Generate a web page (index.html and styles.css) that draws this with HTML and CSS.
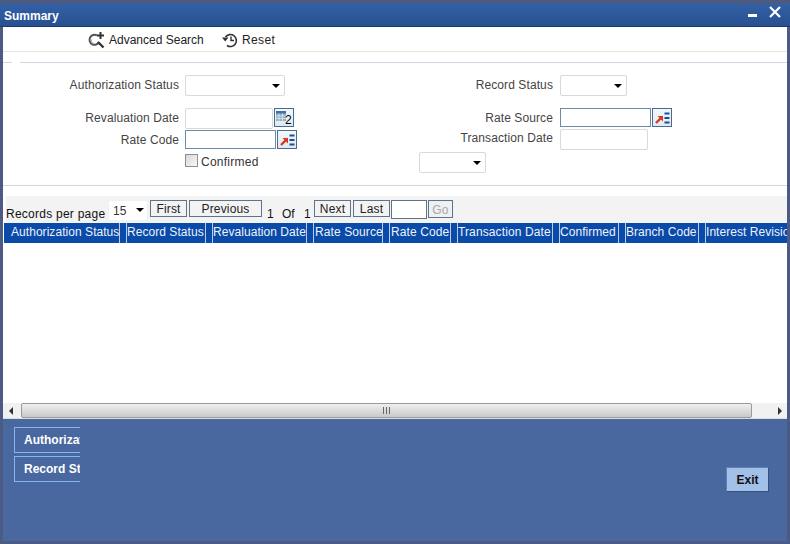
FILE: index.html
```html
<!DOCTYPE html>
<html lang="en">
<head>
<meta charset="utf-8">
<title>Summary</title>
<link rel="stylesheet" href="styles.css">
</head>
<body>
<div class="window">
  <header class="titlebar">
    <span class="title">Summary</span>
    <span class="win-controls">
      <svg class="win-min" width="10" height="4" viewBox="0 0 10 4"><rect width="9" height="3" y="0" fill="#fff"/></svg>
      <svg class="win-close" width="12" height="12" viewBox="0 0 12 12"><path d="M1 1 L11 11 M11 1 L1 11" stroke="#fff" stroke-width="2.2"/></svg>
    </span>
  </header>

  <main class="content">
  <nav class="toolbar">
    <span class="tool tool-search">
      <svg width="17" height="18" viewBox="0 0 17 18" fill="none">
        <path d="M9 4.5 A5 5 0 1 0 11 11" stroke="#555" stroke-width="2"/>
        <path d="M6 13 A5 5 0 0 1 3 8" stroke="#aaa" stroke-width="1"/>
        <path d="M10 11 L15.500 16.500" stroke="#333" stroke-width="2.400"/>
        <path d="M12.500 1 V8 M9 4.500 H16" stroke="#333" stroke-width="2"/>
      </svg>
      <span>Advanced Search</span>
    </span>
    <span class="tool tool-reset">
      <svg width="16" height="16" viewBox="0 0 16 16" fill="none">
        <path d="M3.500 5 A6 6 0 1 1 5 13.500" stroke="#333" stroke-width="1.600"/>
        <path d="M0 5.500 H6.500 L3.200 9.500 Z" fill="#333"/>
        <path d="M9 4.500 V8.500 H12" stroke="#333" stroke-width="1.400"/>
      </svg>
      <span class="reset-text">Reset</span>
    </span>
  </nav>

  <section class="search-form">
    <label class="lbl">Authorization Status</label>
    <div class="select sel-auth"><select aria-label="Authorization Status"><option></option></select></div>
    <label class="lbl">Record Status</label>
    <div class="select sel-record"><select aria-label="Record Status"><option></option></select></div>

    <label class="lbl">Revaluation Date</label>
    <div class="field-group">
      <input class="input soft inp-reval" type="text" aria-label="Revaluation Date">
      <button class="icon-btn cal-btn" type="button">
        <svg width="10" height="10" viewBox="0 0 10 10"><rect width="10" height="10" fill="#8fb3c0"/><rect width="10" height="2.500" fill="#3f6fae"/><path d="M0 5 H10 M0 7.500 H10 M3 2.500 V10 M6.500 2.500 V10" stroke="#e8f0ea" stroke-width=".7"/></svg>
        <span class="cal-num">2</span>
      </button>
    </div>
    <label class="lbl">Rate Source</label>
    <div class="field-group group-source">
      <input class="input strong inp-source" type="text" aria-label="Rate Source">
      <button class="icon-btn lov-btn" type="button">
        <svg width="15" height="12" viewBox="0 0 15 12"><path d="M1 11 L6 6" stroke="#d8391a" stroke-width="2.400"/><path d="M2.500 4 H8 V9.500 Z" fill="#d8391a"/><path d="M9.500 1.500 H14.500 M9.500 6 H14.500 M9.500 10.500 H14.500" stroke="#1d4f94" stroke-width="2"/></svg>
      </button>
    </div>

    <label class="lbl lbl-code">Rate Code</label>
    <div class="field-group group-code">
      <input class="input strong inp-code" type="text" aria-label="Rate Code">
      <button class="icon-btn lov-btn" type="button">
        <svg width="15" height="12" viewBox="0 0 15 12"><path d="M1 11 L6 6" stroke="#d8391a" stroke-width="2.400"/><path d="M2.500 4 H8 V9.500 Z" fill="#d8391a"/><path d="M9.500 1.500 H14.500 M9.500 6 H14.500 M9.500 10.500 H14.500" stroke="#1d4f94" stroke-width="2"/></svg>
      </button>
    </div>
    <label class="lbl lbl-txn">Transaction Date</label>
    <input class="input soft inp-txn" type="text" aria-label="Transaction Date">

    <span></span>
    <label class="confirm"><span class="check"></span><span class="confirm-text">Confirmed</span></label>
    <div class="select sel-extra"><select aria-label="Filter"><option></option></select></div>
  </section>

  <div class="pager">
    <span class="pg-label">Records per page</span>
    <div class="select sel-page"><select aria-label="Records per page"><option>15</option></select></div>
    <button class="pg-btn btn-first" type="button">First</button>
    <button class="pg-btn btn-prev" type="button">Previous</button>
    <span class="pg-num">1</span>
    <span class="pg-of">Of</span>
    <span class="pg-total">1</span>
    <button class="pg-btn btn-next" type="button">Next</button>
    <button class="pg-btn btn-last" type="button">Last</button>
    <input class="pg-input" type="text" aria-label="Page">
    <button class="pg-btn btn-go" type="button">Go</button>
  </div>

  <div class="grid-head">
    <span class="col c1">Authorization Status</span>
    <span class="col c2">Record Status</span>
    <span class="col c3">Revaluation Date</span>
    <span class="col c4">Rate Source</span>
    <span class="col c5">Rate Code</span>
    <span class="col c6">Transaction Date</span>
    <span class="col c7">Confirmed</span>
    <span class="col c8">Branch Code</span>
    <span class="col c9">Interest Revision</span>
  </div>
  <div class="grid-body"></div>

  <div class="scrollbar">
    <span class="arrow-left"></span>
    <div class="thumb"><span class="grip"></span></div>
    <span class="arrow-right"></span>
  </div>

  <footer class="footer">
    <div class="tabs">
      <div class="tab"><span class="tab-text">Authorization Status</span></div>
      <div class="tab"><span class="tab-text">Record Status</span></div>
    </div>
    <button class="exit" type="button">Exit</button>
  </footer>
  </main>
</div>
</body>
</html>
```

FILE: styles.css
```css
* { box-sizing: border-box; }
html, body { margin: 0; padding: 0; }
body { width: 790px; height: 544px; overflow: hidden; font-family: "Liberation Sans", Arial, sans-serif; font-size: 12px; color: #333; background: #4b5b84; }

.window { width: 790px; height: 544px; display: flex; flex-direction: column; padding-top: 4px; background: #4b5b84; }

.titlebar { flex: none; height: 23px; padding: 2px 9px 0 4px; display: flex; justify-content: space-between; align-items: center; background: linear-gradient(#3361a6, #27508f); border-bottom: 1px solid #1d3a68; }
.title { color: #fff; font-weight: bold; font-size: 12px; }
.win-controls { display: flex; align-items: center; gap: 11px; margin-top: -8px; }
.win-min { margin-top: 8px; }

.content { flex: 1; min-height: 0; margin: 0 3px 3px; display: flex; flex-direction: column; background: #fff; }

.toolbar { flex: none; height: 25px; padding: 1px 0 0 85px; display: flex; align-items: center; background: #fff; border-bottom: 1px solid #e6e6e6; }
.tool { display: flex; align-items: center; color: #222; }
.tool-search { gap: 4px; width: 134px; }
.tool-reset { gap: 4px; }
.reset-text { letter-spacing: .35px; }

.search-form { flex: none; height: 124px; margin-top: 10px; padding-top: 12px; background: #fff; border-top: 1px solid #cdd8e4; border-bottom: 1px solid #cdd8e4; display: grid; grid-template-columns: 176px 240px 134px 1fr; grid-template-rows: 33px 21px 23px 21px; position: relative; }
.search-form::before { content: ""; position: absolute; left: 9px; top: -1px; width: 8px; height: 1px; background: #fff; }
.lbl { text-align: right; line-height: 20px; color: #444; letter-spacing: .1px; }
.field-group { display: flex; gap: 1px; margin-left: 6px; align-items: flex-start; }
.group-code { padding-top: 1px; }
.group-source { margin-left: 7px; }
.lbl-code { padding-top: 1px; }
.lbl-txn { margin-top: -1px; }

.select { position: relative; margin-left: 6px; height: 21px; }
.select select { appearance: none; width: 100%; height: 100%; padding: 0 3px; border: 1px solid #d9d9d9; border-radius: 2px; background: #fff; font: inherit; color: #333; }
.select::after { content: ""; position: absolute; right: 5px; top: 9px; border-left: 4px solid transparent; border-right: 4px solid transparent; border-top: 4px solid #000; pointer-events: none; }
.sel-auth { width: 100px; }
.sel-record { width: 67px; margin-left: 7px; }
.sel-extra { width: 67px; margin-left: 0; grid-column: 3; justify-self: start; }

.input { height: 21px; padding: 0 3px; background: #fff; font: inherit; border-radius: 2px; }
.soft { border: 1px solid #d9d9d9; }
.strong { height: 19px; border: 1px solid #6d8aa8; border-radius: 0; }
.inp-reval { width: 88px; }
.inp-source { width: 91px; }
.inp-code { width: 91px; }
.inp-txn { width: 88px; margin-left: 7px; }

.icon-btn { width: 20px; height: 19px; padding: 0; display: flex; align-items: center; justify-content: center; background: linear-gradient(#f3f7fc, #dfe9f5); border: 1px solid #4a6a8e; }
.cal-btn { padding: 2px 0 0 1px; justify-content: flex-start; align-items: flex-start; font: 12px "Liberation Sans", sans-serif; color: #000; }
.cal-num { line-height: 12px; margin: 3px 0 0 -1px; }

.confirm { display: flex; align-items: flex-start; margin-left: 6px; color: #333; line-height: 17px; }
.check { width: 13px; height: 13px; margin: 2px 3px 0 0; border: 1px solid #8e8f8f; background: linear-gradient(135deg, #d8d8d8, #f8f8f8); }
.confirm-text { margin-top: 2px; letter-spacing: .25px; }

.pager { flex: none; height: 27px; margin-top: 10px; margin-left: 3px; display: flex; align-items: flex-start; padding-top: 4px; background: #f3f3f3; color: #111; }
.pg-label { width: 102px; margin-top: 7px; letter-spacing: .25px; white-space: nowrap; }
.sel-page { width: 40px; height: 21px; margin-left: 0; }
.sel-page select { padding-left: 4px; border: 1px solid #f1f1f1; color: #333; }
.sel-page::after { top: 8px; right: 4px; }
.pg-btn { height: 17px; padding: 2px 0 0; margin-left: 2px; background: #f3f3f3; border: 1px solid #5f7388; font: 12px "Liberation Sans", sans-serif; color: #222; line-height: 13px; letter-spacing: .15px; }
.btn-first { width: 37px; }
.btn-prev { width: 73px; }
.btn-next { width: 37px; margin-left: 5px; }
.btn-last { width: 37px; }
.btn-go { width: 25px; height: 18px; margin-left: 1px; color: #aaa; background: #eef0f2; }
.pg-num { margin: 7px 0 0 5px; width: 15px; }
.pg-of { margin-top: 7px; width: 22px; }
.pg-total { margin-top: 7px; width: 5px; }
.pg-input { width: 36px; height: 19px; margin-left: 1px; border: 1px solid #5f7388; background: #fff; }

.grid-head { flex: none; height: 20px; margin-left: 1px; display: flex; overflow: hidden; background: #0a4aa8; color: #eef3fb; white-space: nowrap; line-height: 18px; letter-spacing: .05px; }
.col { flex: none; height: 20px; margin-right: 6px; border-right: 1px solid #b9cce8; border-left: 1px solid #b9cce8; }
.c1 { width: 116px; padding-left: 7px; border-left: 0; }
.c2 { width: 80px; }
.c3 { width: 95px; }
.c4 { width: 70px; padding-left: 1px; letter-spacing: .1px; }
.c5 { width: 62px; padding-left: 1px; letter-spacing: .1px; }
.c6 { width: 96px; letter-spacing: .12px; }
.c7 { width: 60px; }
.c8 { width: 74px; }
.c9 { width: 120px; border-right: 0; }

.grid-body { flex: 1; min-height: 0; background: #fff; }

.scrollbar { flex: none; height: 16px; display: flex; align-items: center; background: #f1f1f1; border-bottom: 1px solid #ddd; }
.arrow-left { margin-left: 6px; width: 0; height: 0; border-top: 4px solid transparent; border-bottom: 4px solid transparent; border-right: 4px solid #333; }
.thumb { margin-left: 8px; width: 731px; height: 15px; display: flex; align-items: center; justify-content: center; background: linear-gradient(#efefef, #c9c9c9); border: 1px solid #9a9a9a; border-radius: 2px; }
.grip { width: 7px; height: 7px; background: repeating-linear-gradient(90deg, #666 0 1px, transparent 1px 3px); }
.arrow-right { margin-left: 26px; width: 0; height: 0; border-top: 4px solid transparent; border-bottom: 4px solid transparent; border-left: 4px solid #333; }

.footer { flex: none; height: 122px; padding: 8px 18px 0 11px; display: flex; justify-content: space-between; background: #48689f; }
.tabs { display: flex; flex-direction: column; gap: 3px; }
.tab { width: 66px; height: 26px; overflow: hidden; border: 1px solid #85b6ee; border-right: 0; padding-left: 9px; color: #fff; font-weight: bold; line-height: 24px; white-space: nowrap; }
.exit { align-self: flex-start; width: 43px; height: 25px; margin-top: 40px; padding: 0; background: #a3c0e8; border: 1px solid #5f82b6; border-right-color: #34527f; border-bottom-color: #34527f; font: bold 12px "Liberation Sans", sans-serif; color: #111; }
```
